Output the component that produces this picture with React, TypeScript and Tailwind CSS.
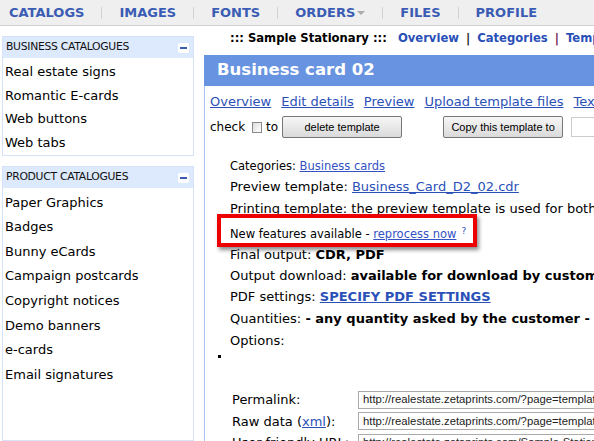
import React from "react";

const navItems = ["CATALOGS", "IMAGES", "FONTS", "ORDERS", "FILES", "PROFILE"];

const business = ["Real estate signs", "Romantic E-cards", "Web buttons", "Web tabs"];
const product = [
  "Paper Graphics",
  "Badges",
  "Bunny eCards",
  "Campaign postcards",
  "Copyright notices",
  "Demo banners",
  "e-cards",
  "Email signatures",
];

function Minus() {
  return (
    <span className="flex items-center justify-center w-[11px] h-[10px] bg-white rounded-[2px]">
      <span className="block w-[7px] h-[2px] bg-[#3a5cb4]" />
    </span>
  );
}

function SideBox({ title, items, rowH, grow }: { title: string; items: string[]; rowH: string; grow?: boolean }) {
  return (
    <div className={`border border-[#d5e2f7] ${grow ? "flex-1" : ""}`}>
      <div className="h-[21px] bg-[#dde9fc] flex items-center justify-between pl-[3px] pr-[4px]">
        <span className="text-[10.8px] tracking-[-0.3px] text-[#111]">{title}</span>
        <Minus />
      </div>
      <div className="pt-[2px] pb-[1px]">
        {items.map((i) => (
          <div key={i} className={`${rowH} flex items-center pl-[2px] text-[13px] text-black`}>
            {i}
          </div>
        ))}
      </div>
    </div>
  );
}

function Btn({ children, w }: { children: React.ReactNode; w: string }) {
  return (
    <span
      className={`${w} h-[22px] flex items-center justify-center border border-[#777] rounded-[2px] bg-gradient-to-b from-[#f7f7f7] to-[#dadada] font-['Liberation_Sans'] text-[11px] text-black`}
    >
      {children}
    </span>
  );
}

function UrlBox({ v }: { v: string }) {
  return (
    <div className="h-[18px] w-[260px] border border-[#aaa] flex items-center pl-[4px] font-['Liberation_Sans'] text-[11.3px] text-[#222] whitespace-nowrap overflow-hidden">
      {v}
    </div>
  );
}

export default function App() {
  const link = "text-[#2a50b8] underline";
  return (
    <div className="w-[594px] h-[441px] overflow-hidden bg-white font-['DejaVu_Sans',sans-serif] flex flex-col">
      {/* top nav */}
      <div className="h-[26px] shrink-0 bg-[#efefef] border-b border-[#d2d2d2] flex items-center pl-[9px] whitespace-nowrap">
        {navItems.map((n, i) => (
          <React.Fragment key={n}>
            {i > 0 && <span className="mx-[17px] w-px h-[12px] bg-[#d3d3d3]" />}
            <span className="flex items-center text-[13px] font-bold text-[#3a5cb4]">
              {n}
              {n === "ORDERS" && (
                <span className="ml-[2px] w-0 h-0 border-l-[4px] border-r-[4px] border-t-[4px] border-l-transparent border-r-transparent border-t-[#aaa]" />
              )}
            </span>
          </React.Fragment>
        ))}
      </div>

      <div className="flex flex-1 min-h-0">
        {/* sidebar */}
        <div className="ml-[2px] mt-[10px] w-[192px] shrink-0 flex flex-col gap-[10px]">
          <SideBox title="BUSINESS CATALOGUES" items={business} rowH="h-[23.5px]" />
          <SideBox title="PRODUCT CATALOGUES" items={product} rowH="h-[24.6px]" grow />
        </div>

        {/* main */}
        <div className="ml-[10px] pt-[3px] w-[420px] shrink-0 flex flex-col whitespace-nowrap">
          <div className="h-[26px] shrink-0 pl-[26px] text-[11.6px] font-bold leading-[18px] flex">
            <span className="text-black">::: Sample Stationary :::</span>
            <span className="ml-[11px] text-[#2a50b8]">Overview</span>
            <span className="mx-[7px] text-[#222]">|</span>
            <span className="text-[#2a50b8]">Categories</span>
            <span className="mx-[7px] text-[#6a2050]">|</span>
            <span className="text-[#2a50b8]">Templates</span>
          </div>

          <div className="h-[31px] shrink-0 bg-[#6893e0] pl-[13px] flex items-center text-[16.5px] font-bold text-white">
            Business card 02
          </div>

          <div className="flex-1 border-l border-[#a9c2ee]">
            <div className="pt-[7px] pl-[5px] flex gap-[10px] text-[13px] leading-[18px]">
              <span className={link}>Overview</span>
              <span className={link}>Edit details</span>
              <span className={link}>Preview</span>
              <span className={link}>Upload template files</span>
              <span className={link}>Text fields</span>
            </div>

            <div className="mt-[5px] h-[22px] pl-[5px] flex items-center text-[12px]">
              <span>check</span>
              <span className="ml-[7px] w-[11px] h-[11px] border border-[#888] bg-gradient-to-br from-[#ddd] to-white" />
              <span className="ml-[4px]">to</span>
              <span className="ml-[4px]">
                <Btn w="w-[120px]">delete template</Btn>
              </span>
              <span className="ml-[41px]">
                <Btn w="w-[120px]">Copy this template to</Btn>
              </span>
              <span className="ml-[8px] w-[60px] h-[20px] border border-[#ccc]" />
            </div>

            <div className="mt-[20px] pl-[25px] text-[13px] text-black">
              <div className="h-[18px] flex items-center text-[11.5px]">
                Categories:&nbsp;<span className="text-[#3352c4] underline">Business cards</span>
              </div>
              <div className="h-[21px] flex items-center">
                Preview template:&nbsp;<span className={link}>Business_Card_D2_02.cdr</span>
              </div>
              <div className="h-[23px] flex items-center">
                Printing template: the preview template is used for both
              </div>
              <div className="h-[24px] pt-[6px] flex items-center text-[11.5px] relative">
                New features available -&nbsp;<span className="text-[#3352c4] underline">reprocess now</span>
                <sup className="ml-[5px] text-[9px] text-[#3352c4]">?</sup>
                <div className="absolute left-[-13px] top-[-6px] w-[260px] h-[33px] border-[4px] border-[#ee0000] shadow-[2px_3px_4px_rgba(0,0,0,0.45)]" />
              </div>
              <div className="h-[21px] flex items-center">
                Final output:&nbsp;<b>CDR, PDF</b>
              </div>
              <div className="h-[21px] flex items-center">
                Output download:&nbsp;<b>available for download by customer</b>
              </div>
              <div className="h-[22px] flex items-center">
                PDF settings:&nbsp;<b className={link}>SPECIFY PDF SETTINGS</b>
              </div>
              <div className="h-[22px] flex items-center">
                Quantities:&nbsp;<b>- any quantity asked by the customer -</b>
              </div>
              <div className="h-[22px] flex items-center">Options:</div>
            </div>

            <div className="h-[8px] pl-[13px] flex items-center">
              <span className="w-[3px] h-[3px] bg-black" />
            </div>

            <div className="mt-[30px] pl-[27px] flex flex-col gap-[2px] text-[13px]">
              <div className="flex items-center">
                <span className="w-[126px]">Permalink:</span>
                <UrlBox v="http://realestate.zetaprints.com/?page=template;id=" />
              </div>
              <div className="flex items-center">
                <span className="w-[126px]">
                  Raw data (<span className={link}>xml</span>):
                </span>
                <UrlBox v="http://realestate.zetaprints.com/?page=template-xml" />
              </div>
              <div className="flex items-center">
                <span className="w-[126px]">User-friendly URL:</span>
                <UrlBox v="http://realestate.zetaprints.com/Sample-Stationary" />
              </div>
            </div>
          </div>
        </div>
      </div>
    </div>
  );
}
